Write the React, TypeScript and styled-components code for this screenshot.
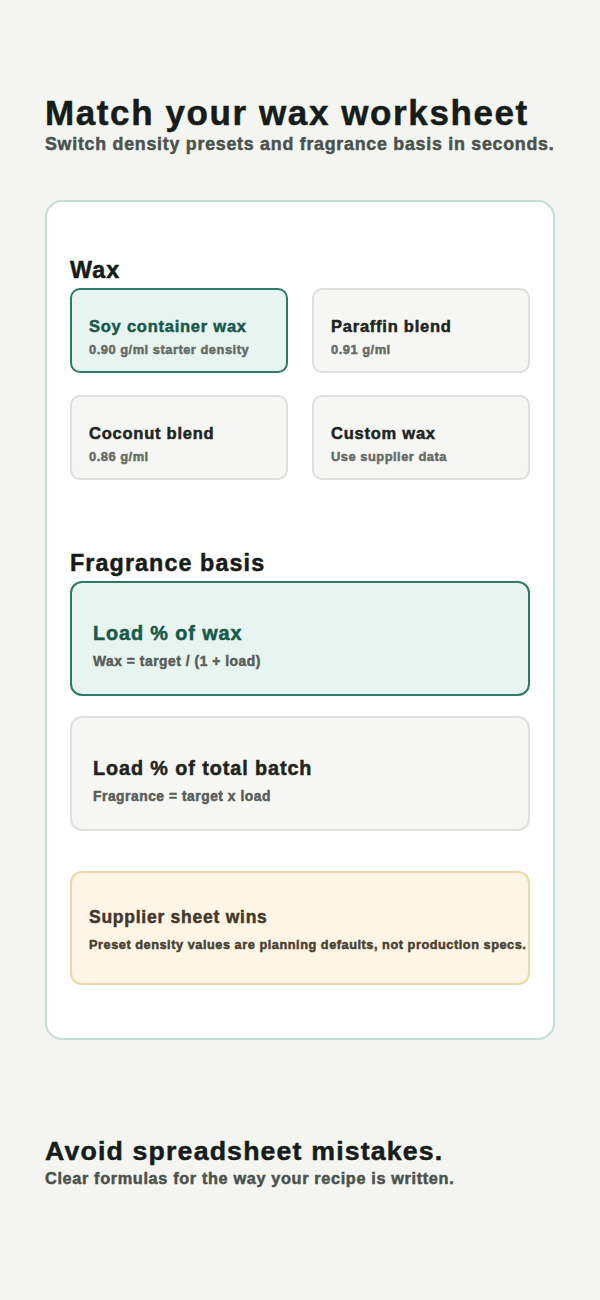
import styled, { createGlobalStyle } from 'styled-components'

const GlobalStyle = createGlobalStyle`
  html, body {
    margin: 0;
    padding: 0;
    background: #f4f5f1;
  }
  body {
    font-family: "Liberation Sans", Arial, sans-serif;
    color: #1a1f1c;
    -webkit-text-stroke: 0.5px currentColor;
  }
`

const waxOptions = [
  { name: 'Soy container wax', detail: '0.90 g/ml starter density', active: true },
  { name: 'Paraffin blend', detail: '0.91 g/ml', active: false },
  { name: 'Coconut blend', detail: '0.86 g/ml', active: false },
  { name: 'Custom wax', detail: 'Use supplier data', active: false },
]

const basisOptions = [
  { name: 'Load % of wax', detail: 'Wax = target / (1 + load)', active: true },
  { name: 'Load % of total batch', detail: 'Fragrance = target x load', active: false },
]

export default function App() {
  return (
    <>
      <GlobalStyle />
      <Page>
        <Header>
          <Title>Match your wax worksheet</Title>
          <Subtitle>Switch density presets and fragrance basis in seconds.</Subtitle>
        </Header>

        <Panel>
          <WaxSection>
            <SectionTitle>Wax</SectionTitle>
            <WaxGrid>
              {waxOptions.map((o) => (
                <WaxCard key={o.name} $active={o.active}>
                  <WaxName $active={o.active}>{o.name}</WaxName>
                  <WaxDetail>{o.detail}</WaxDetail>
                </WaxCard>
              ))}
            </WaxGrid>
          </WaxSection>

          <BasisSection>
            <SectionTitle>Fragrance basis</SectionTitle>
            <BasisList>
              {basisOptions.map((o) => (
                <BasisCard key={o.name} $active={o.active}>
                  <BasisName $active={o.active}>{o.name}</BasisName>
                  <BasisDetail>{o.detail}</BasisDetail>
                </BasisCard>
              ))}
            </BasisList>
          </BasisSection>

          <Notice>
            <NoticeTitle>Supplier sheet wins</NoticeTitle>
            <NoticeText>Preset density values are planning defaults, not production specs.</NoticeText>
          </Notice>
        </Panel>

        <Footer>
          <FooterTitle>Avoid spreadsheet mistakes.</FooterTitle>
          <FooterText>Clear formulas for the way your recipe is written.</FooterText>
        </Footer>
      </Page>
    </>
  )
}

const Page = styled.main`
  width: 600px;
  min-height: 1300px;
  padding: 93px 45px 0;
  box-sizing: border-box;
`

const Header = styled.header`
  margin-bottom: 45px;
`

const Title = styled.h1`
  margin: 0;
  font-size: 35px;
  line-height: 40px;
  letter-spacing: 1.6px;
  font-weight: 700;
  color: #161c19;
`

const Subtitle = styled.p`
  margin: 0;
  font-size: 17.8px;
  line-height: 22px;
  letter-spacing: 0.76px;
  font-weight: 700;
  color: #4b524e;
  white-space: nowrap;
`

const Panel = styled.section`
  background: #ffffff;
  border: 2px solid #c3ded4;
  border-radius: 17px;
  padding: 54px 23px 53px;
  display: flex;
  flex-direction: column;
`

const WaxSection = styled.div`
  margin-bottom: 69px;
`

const BasisSection = styled.div`
  margin-bottom: 40px;
`

const SectionTitle = styled.h2`
  margin: 0 0 4px;
  font-size: 23.3px;
  line-height: 28px;
  letter-spacing: 1.1px;
  font-weight: 700;
  color: #161c19;
`

const WaxGrid = styled.div`
  display: grid;
  grid-template-columns: 1fr 1fr;
  gap: 22px 24px;
`

const WaxCard = styled.div<{ $active: boolean }>`
  height: 85px;
  box-sizing: border-box;
  padding: 26px 17px 0;
  display: flex;
  flex-direction: column;
  gap: 4px;
  border-radius: 10px;
  border: 2px solid ${(p) => (p.$active ? '#2d7a66' : '#dde0dc')};
  background: ${(p) => (p.$active ? '#e8f4f0' : '#f6f7f4')};
`

const WaxName = styled.div<{ $active: boolean }>`
  font-size: 16.5px;
  line-height: 21px;
  letter-spacing: 0.76px;
  font-weight: 700;
  color: ${(p) => (p.$active ? '#17594a' : '#1e2420')};
`

const WaxDetail = styled.div`
  font-size: 12.9px;
  line-height: 17px;
  letter-spacing: 0.5px;
  font-weight: 700;
  color: #666b68;
`

const BasisList = styled.div`
  display: flex;
  flex-direction: column;
  gap: 20px;
`

const BasisCard = styled.div<{ $active: boolean }>`
  height: 115px;
  box-sizing: border-box;
  padding: 38px 21px 0;
  display: flex;
  flex-direction: column;
  gap: 7px;
  border-radius: 12px;
  border: 2px solid ${(p) => (p.$active ? '#2d7a66' : '#dde0dc')};
  background: ${(p) => (p.$active ? '#e8f4f0' : '#f6f7f4')};
`

const BasisName = styled.div<{ $active: boolean }>`
  font-size: 19.8px;
  line-height: 25px;
  letter-spacing: 0.92px;
  font-weight: 700;
  color: ${(p) => (p.$active ? '#17594a' : '#1e2420')};
`

const BasisDetail = styled.div`
  font-size: 13.8px;
  line-height: 18px;
  letter-spacing: 0.54px;
  font-weight: 700;
  color: #585e5a;
`

const Notice = styled.aside`
  height: 114px;
  box-sizing: border-box;
  padding: 33px 17px 0;
  display: flex;
  flex-direction: column;
  gap: 8px;
  border-radius: 12px;
  border: 2px solid #ead9a6;
  background: #fdf6e7;
`

const NoticeTitle = styled.div`
  font-size: 17.5px;
  line-height: 22px;
  letter-spacing: 0.75px;
  font-weight: 700;
  color: #45392a;
`

const NoticeText = styled.div`
  font-size: 12.75px;
  line-height: 17px;
  letter-spacing: 0.53px;
  font-weight: 700;
  color: #4a3f30;
  white-space: nowrap;
`

const Footer = styled.footer`
  margin-top: 95px;
`

const FooterTitle = styled.h2`
  margin: 0;
  font-size: 26.7px;
  line-height: 32px;
  letter-spacing: 1.17px;
  font-weight: 700;
  color: #161c19;
`

const FooterText = styled.p`
  margin: 1px 0 0;
  font-size: 16.3px;
  line-height: 20px;
  letter-spacing: 0.64px;
  font-weight: 700;
  color: #4b524e;
`
